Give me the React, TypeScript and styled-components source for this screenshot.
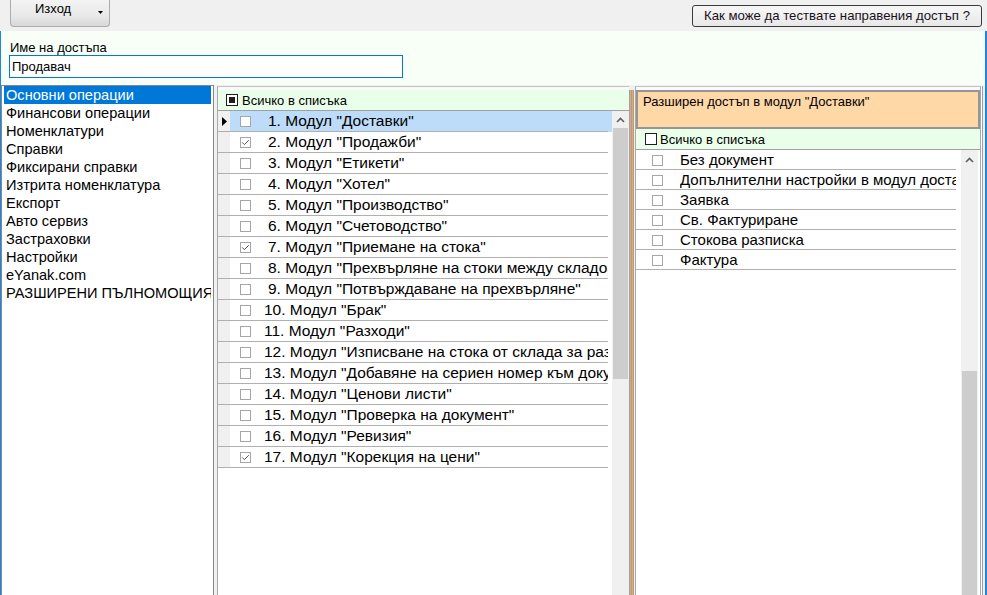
import React from 'react';
import styled, { createGlobalStyle } from 'styled-components';

const GlobalStyle = createGlobalStyle`
  html, body {
    margin: 0;
    padding: 0;
    background: #f0f0f0;
  }
  body {
    font-family: "Liberation Sans", Arial, sans-serif;
    color: #000;
  }
  * {
    box-sizing: border-box;
  }
`;

const Window = styled.div`
  width: 987px;
  height: 595px;
  display: flex;
  flex-direction: column;
  overflow: hidden;
  background: #f0f0f0;
`;

const TopBar = styled.div`
  height: 31px;
  flex-shrink: 0;
  display: flex;
  align-items: flex-start;
  justify-content: space-between;
  padding: 0 5px 0 10px;
`;

const ExitButton = styled.button`
  width: 100px;
  height: 27px;
  display: flex;
  align-items: flex-start;
  padding: 1px 6px 0 24px;
  border: 1px solid #acacac;
  border-top: none;
  border-radius: 0 0 4px 4px;
  background: linear-gradient(#f3f3f3, #e9e9e9 60%, #d8d8d8);
  font-family: inherit;
  font-size: 13px;
  line-height: 15px;
  color: #000;
  cursor: pointer;
`;

const ExitLabel = styled.span`
  flex: 1;
  text-align: left;
`;

const Caret = styled.svg`
  margin-top: 10px;
  flex-shrink: 0;
`;

const HelpButton = styled.button`
  width: 290px;
  height: 22px;
  margin-top: 5px;
  padding: 0;
  border: 1px solid #3a3a3a;
  border-radius: 3px;
  background: linear-gradient(#f7f7f7, #e8e8e8);
  font-family: inherit;
  font-size: 13.2px;
  line-height: 20px;
  color: #1a1020;
  cursor: pointer;
`;

const Body = styled.div`
  flex: 1;
  min-height: 0;
  display: flex;
  flex-direction: column;
  border-left: 1px solid #1c86e0;
  border-right: 2px solid #1c86e0;
  background: #f7fff7;
`;

const NameSection = styled.div`
  padding: 9px 0 0 8px;
  display: flex;
  flex-direction: column;
  align-items: flex-start;
`;

const FieldLabel = styled.label`
  font-size: 13px;
  line-height: 15px;
  padding-left: 1px;
`;

const NameInput = styled.input`
  width: 394px;
  height: 23px;
  margin: 0;
  padding: 0 2px;
  border: 1px solid #0078d7;
  background: #fff;
  font-family: inherit;
  font-size: 13px;
  color: #000;
  outline: none;
`;

const Panels = styled.div`
  flex: 1;
  min-height: 0;
  margin-top: 7px;
  display: flex;
  align-items: stretch;
  padding-right: 4px;
  background: #f0f0f0;
`;

const CategoryList = styled.ul`
  width: 213px;
  flex-shrink: 0;
  margin: 0;
  padding: 0 2px;
  list-style: none;
  border: 1px solid #828790;
  border-bottom: none;
  background: #fff;
  overflow: hidden;
`;

const CategoryItem = styled.li<{ $selected?: boolean }>`
  height: 18px;
  line-height: 18px;
  padding-left: 2px;
  font-size: 14.6px;
  white-space: nowrap;
  overflow: hidden;
  background: ${(p) => (p.$selected ? '#0078d7' : 'transparent')};
  color: ${(p) => (p.$selected ? '#fff' : '#000')};
`;

const ModulesPanel = styled.section`
  width: 412px;
  flex-shrink: 0;
  margin: 1px 0 0 3px;
  padding-top: 3px;
  display: flex;
  flex-direction: column;
  border-left: 1px solid #a9a9a9;
  border-top: 1px solid #c4c4c4;
  background: #fafafa;
`;

const AllHeader = styled.div<{ $inset: number; $gap: number }>`
  height: 20px;
  flex-shrink: 0;
  display: flex;
  align-items: center;
  gap: ${(p) => p.$gap}px;
  padding-left: ${(p) => p.$inset}px;
  background: #eaffea;
  font-size: 13px;
`;

const BigBox = styled.span`
  width: 12px;
  height: 12px;
  flex-shrink: 0;
  display: flex;
  align-items: center;
  justify-content: center;
  border: 1px solid #1e1e1e;
  background: #fff;
`;

const BoxFill = styled.span`
  width: 6px;
  height: 6px;
  background: #1e1e1e;
`;

const Grid = styled.div`
  flex: 1;
  min-height: 0;
  display: flex;
  border-top: 1px solid #a0a0a0;
  background: #fff;
`;

const Rows = styled.div`
  flex: 1;
  min-width: 0;
  display: flex;
  flex-direction: column;
`;

const ModuleRow = styled.div<{ $selected?: boolean }>`
  height: 21px;
  flex-shrink: 0;
  display: flex;
  padding-right: 4px;
  background: linear-gradient(#b0b0b0, #b0b0b0) left bottom / calc(100% - 4px) 1px no-repeat
    ${(p) => (p.$selected ? '#bcdcfa' : '#fff')};
`;

const RowHeader = styled.div`
  width: 12px;
  height: 20px;
  flex-shrink: 0;
  display: flex;
  align-items: center;
  padding-left: 4px;
  background: #f0f0f0;
`;

const CheckCell = styled.div<{ $width: number; $left: number }>`
  width: ${(p) => p.$width}px;
  height: 20px;
  flex-shrink: 0;
  display: flex;
  align-items: center;
  padding-left: ${(p) => p.$left}px;
`;

const SmallBox = styled.span`
  width: 11px;
  height: 11px;
  display: flex;
  align-items: center;
  justify-content: center;
  border: 1px solid #a6a6a6;
  background: #fff;
`;

const RowText = styled.div<{ $indent: number }>`
  flex: 1;
  min-width: 0;
  line-height: 20px;
  padding-left: ${(p) => p.$indent}px;
  font-size: 15.5px;
  white-space: nowrap;
  overflow: hidden;
`;

const Scrollbar = styled.div<{ $ml?: number; $mr?: number }>`
  width: 17px;
  flex-shrink: 0;
  display: flex;
  flex-direction: column;
  margin: 0 ${(p) => p.$mr ?? 0}px 0 ${(p) => p.$ml ?? 0}px;
  background: #f0f0f0;
`;

const ScrollArrow = styled.div<{ $h: number }>`
  height: ${(p) => p.$h}px;
  flex-shrink: 0;
  display: flex;
  align-items: center;
  justify-content: center;
`;

const ScrollTrack = styled.div<{ $h?: number }>`
  flex: ${(p) => (p.$h ? `0 0 ${p.$h}px` : '1')};
`;

const ScrollThumb = styled.div<{ $h?: number }>`
  flex: ${(p) => (p.$h ? `0 0 ${p.$h}px` : '1')};
  margin: 0 1px;
  background: #cdcdcd;
`;

const Splitter = styled.div`
  width: 6px;
  flex-shrink: 0;
  margin-top: 5px;
  background: linear-gradient(
    90deg,
    #a0a0a0 0 1px,
    #f2a45c 1px 2px,
    #a0a0a0 2px 3px,
    #f2a45c 3px 4px,
    #a0a0a0 4px 5px,
    #f0f0f0 5px 6px
  );
`;

const DetailPanel = styled.section`
  width: 346px;
  flex-shrink: 0;
  margin-top: 1px;
  padding-top: 3px;
  display: flex;
  flex-direction: column;
  border: 1px solid #a9a9a9;
  border-top-color: #c4c4c4;
  border-bottom: none;
  background: #fafafa;
  box-shadow: 1px 0 0 #fff, 2px 0 0 #a0a0a0;
`;

const DetailTitle = styled.div`
  height: 39px;
  flex-shrink: 0;
  padding: 2px 5px 0;
  border: 2px solid #959595;
  background: #ffd8a8;
  font-size: 13px;
  line-height: 15px;
`;

const DetailRow = styled.div`
  height: 20px;
  flex-shrink: 0;
  display: flex;
  border-bottom: 1px solid #b0b0b0;
`;

const DetailText = styled.div`
  flex: 1;
  min-width: 0;
  line-height: 19px;
  font-size: 15px;
  white-space: nowrap;
  overflow: hidden;
`;

const categories = [
  'Основни операции',
  'Финансови операции',
  'Номенклатури',
  'Справки',
  'Фиксирани справки',
  'Изтрита номенклатура',
  'Експорт',
  'Авто сервиз',
  'Застраховки',
  'Настройки',
  'eYanak.com',
  'РАЗШИРЕНИ ПЪЛНОМОЩИЯ',
];

const modules = [
  { name: 'Доставки', checked: false },
  { name: 'Продажби', checked: true },
  { name: 'Етикети', checked: false },
  { name: 'Хотел', checked: false },
  { name: 'Производство', checked: false },
  { name: 'Счетоводство', checked: false },
  { name: 'Приемане на стока', checked: true },
  { name: 'Прехвърляне на стоки между складове', checked: false },
  { name: 'Потвърждаване на прехвърляне', checked: false },
  { name: 'Брак', checked: false },
  { name: 'Разходи', checked: false },
  { name: 'Изписване на стока от склада за разход', checked: false },
  { name: 'Добавяне на сериен номер към документ', checked: false },
  { name: 'Ценови листи', checked: false },
  { name: 'Проверка на документ', checked: false },
  { name: 'Ревизия', checked: false },
  { name: 'Корекция на цени', checked: true },
];

const documents = [
  'Без документ',
  'Допълнителни настройки в модул доставки',
  'Заявка',
  'Св. Фактуриране',
  'Стокова разписка',
  'Фактура',
];

const Check: React.FC<{ checked?: boolean }> = ({ checked }) => (
  <SmallBox>
    {checked && (
      <svg width="9" height="9" viewBox="0 0 9 9">
        <path d="M1.2 4.4 L3.4 6.6 L7.8 2.2" fill="none" stroke="#555" strokeWidth="1" />
      </svg>
    )}
  </SmallBox>
);

const UpChevron = () => (
  <svg width="9" height="6" viewBox="0 0 9 6">
    <path d="M1 5 L4.5 1.5 L8 5" fill="none" stroke="#606060" strokeWidth="1.6" />
  </svg>
);

const App: React.FC = () => {
  return (
    <Window>
      <GlobalStyle />
      <TopBar>
        <ExitButton>
          <ExitLabel>Изход</ExitLabel>
          <Caret width="5" height="3" viewBox="0 0 5 3">
            <path d="M0 0 H5 L2.5 3 Z" fill="#000" />
          </Caret>
        </ExitButton>
        <HelpButton>Как може да тествате направения достъп ?</HelpButton>
      </TopBar>

      <Body>
        <NameSection>
          <FieldLabel>Име на достъпа</FieldLabel>
          <NameInput readOnly value="Продавач" />
        </NameSection>

        <Panels>
          <CategoryList>
            {categories.map((c, i) => (
              <CategoryItem key={c} $selected={i === 0}>
                {c}
              </CategoryItem>
            ))}
          </CategoryList>

          <ModulesPanel>
            <AllHeader $inset={8} $gap={4}>
              <BigBox>
                <BoxFill />
              </BigBox>
              Всичко в списъка
            </AllHeader>
            <Grid>
              <Rows>
                {modules.map((m, i) => (
                  <ModuleRow key={m.name} $selected={i === 0}>
                    <RowHeader>
                      {i === 0 && (
                        <svg width="5" height="9" viewBox="0 0 5 9">
                          <path d="M0 0 L5 4.5 L0 9 Z" fill="#000" />
                        </svg>
                      )}
                    </RowHeader>
                    <CheckCell $width={30} $left={10}>
                      <Check checked={m.checked} />
                    </CheckCell>
                    <RowText $indent={i < 9 ? 8 : 4}>
                      {`${i + 1}. Модул "${m.name}"`}
                    </RowText>
                  </ModuleRow>
                ))}
              </Rows>
              <Scrollbar>
                <ScrollArrow $h={17}>
                  <UpChevron />
                </ScrollArrow>
                <ScrollThumb $h={251} />
                <ScrollTrack />
              </Scrollbar>
            </Grid>
          </ModulesPanel>

          <Splitter />

          <DetailPanel>
            <DetailTitle>Разширен достъп в модул "Доставки"</DetailTitle>
            <AllHeader $inset={9} $gap={3}>
              <BigBox />
              Всичко в списъка
            </AllHeader>
            <Grid>
              <Rows>
                {documents.map((d) => (
                  <DetailRow key={d}>
                    <CheckCell $width={44} $left={16}>
                      <Check />
                    </CheckCell>
                    <DetailText>{d}</DetailText>
                  </DetailRow>
                ))}
              </Rows>
              <Scrollbar $ml={5} $mr={2}>
                <ScrollArrow $h={19}>
                  <UpChevron />
                </ScrollArrow>
                <ScrollTrack $h={202} />
                <ScrollThumb />
              </Scrollbar>
            </Grid>
          </DetailPanel>
        </Panels>
      </Body>
    </Window>
  );
};

export default App;
